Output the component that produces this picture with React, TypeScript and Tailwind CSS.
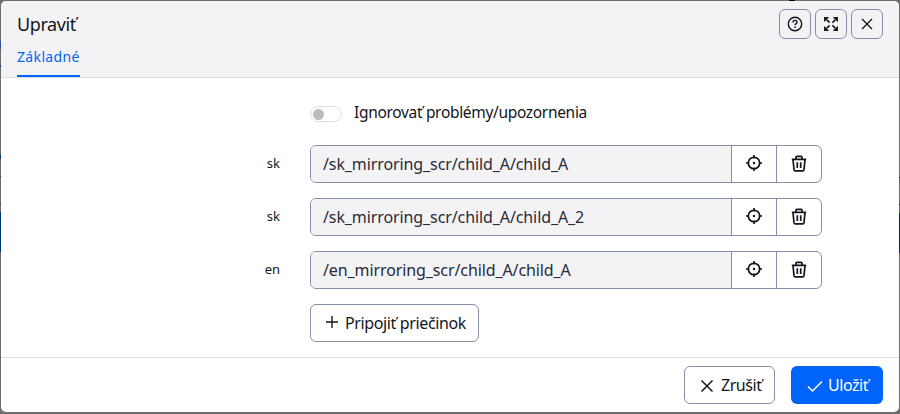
import React from "react";

type IconProps = { children: React.ReactNode; className: string; width?: number };

function Icon({ children, className, width = 1.5 }: IconProps) {
  return (
    <svg viewBox="0 0 16 16" fill="none" stroke="currentColor" strokeWidth={width} className={`shrink-0 ${className}`}>
      {children}
    </svg>
  );
}

const HelpIcon = () => (
  <Icon className="size-4" width={1.4}>
    <circle cx="8" cy="8" r="6.7" />
    <path d="M6 6.4C6 5.1 6.8 4.4 8 4.4s2 .7 2 1.8c0 1.4-1.9 1.5-1.9 3" />
    <path d="M8.1 10.4v1.5" />
  </Icon>
);

const ExpandIcon = () => (
  <Icon className="size-4" width={1.5}>
    <path d="M1.8 5.6V1.8h3.8M10.4 1.8h3.8v3.8M14.2 10.4v3.8h-3.8M5.6 14.2H1.8v-3.8M2 2l4.6 4.6M14 2L9.4 6.6M14 14L9.4 9.4M2 14l4.6-4.6" />
  </Icon>
);

const CloseIcon = () => (
  <Icon className="size-4" width={1.4}>
    <path d="M3 3l10 10M13 3L3 13" />
  </Icon>
);

const TargetIcon = () => (
  <Icon className="mb-[2px] size-4" width={1.7}>
    <circle cx="8" cy="8" r="5.7" />
    <path d="M8 0v3.2M8 12.8V16M0 8h3.2M12.8 8H16" />
    <circle cx="8" cy="8" r="1.2" fill="currentColor" stroke="none" />
  </Icon>
);

const TrashIcon = () => (
  <Icon className="mb-[2px] h-[17px] w-4" width={1.7}>
    <path d="M.8 3.9h14.4M2 4l1 10.2c.1.8.5 1.2 1.3 1.2h7.4c.8 0 1.2-.4 1.3-1.2L14 4M5 3.8V1.7c0-.5.3-.8.8-.8h4.4c.5 0 .8.3.8.8v2.1M6.3 6.7v5.9M9.7 6.7v5.9" />
  </Icon>
);

const folders = [
  { lang: "sk", path: "/sk_mirroring_scr/child_A/child_A" },
  { lang: "sk", path: "/sk_mirroring_scr/child_A/child_A_2" },
  { lang: "en", path: "/en_mirroring_scr/child_A/child_A" },
];

const headerActions = [HelpIcon, ExpandIcon, CloseIcon];

export default function App() {
  return (
    <div className="flex h-[414px] w-[900px] overflow-hidden bg-[#6d6d6f] font-['Noto_Sans','Open_Sans',sans-serif] text-[#13151b]">
      <div className="flex w-px shrink-0 flex-col">
        <div className="mt-[41px] h-2 bg-[#35549a]" />
        <div className="mt-4 h-0.5 bg-[#073589]" />
        <div className="mt-[88px] h-1 bg-[#063b88]" />
        <div className="mt-[17px] h-px bg-[#333]" />
        <div className="mt-[26px] h-px bg-[#333]" />
        <div className="mt-2 h-10 bg-[#00317f]" />
      </div>

      <div className="flex w-[898px] shrink-0 flex-col">
        <div className="h-px shrink-0 pl-[788px]">
          <div className="h-px w-[6px] bg-black" />
        </div>
        <section className="flex h-[411px] shrink-0 flex-col overflow-hidden rounded-[5px] bg-white">
          <header className="flex h-[77px] shrink-0 justify-between border-b border-[#dcdde1] bg-[#f3f3f6] pr-4 pl-4">
            <div className="flex flex-col items-start">
              <h1 className="mt-[11px] h-[25px] text-[18px] leading-[25px] tracking-[-0.4px] whitespace-nowrap">Upraviť</h1>
              <div className="mt-[7px] h-[33px] w-[63px] border-b-2 border-[#0063fb] text-[14px] leading-[25px] tracking-[0.35px] whitespace-nowrap text-[#0063fb]">
                Základné
              </div>
            </div>
            <div className="flex gap-1 pt-2">
              {headerActions.map((Glyph, i) => (
                <button key={i} className="flex h-[30px] w-8 items-center justify-center rounded-[6px] border border-[#868ea9]">
                  <Glyph />
                </button>
              ))}
            </div>
          </header>

          <main className="flex h-[279px] shrink-0 flex-col">
            <div className="mt-[22px] ml-[309px] flex h-6 items-center">
              <div className="mt-1 flex h-4 w-8 items-center rounded-full border border-[#dcdfe7] pl-[2px]">
                <div className="size-[11px] rounded-full bg-[#bdbdbd]" />
              </div>
              <span className="ml-[12px] text-[15.5px] leading-6 tracking-[-0.32px] whitespace-nowrap">Ignorovať problémy/upozornenia</span>
            </div>
            <div className="mt-[21px] flex flex-col gap-[15px]">
              {folders.map((folder) => (
                <div key={folder.path} className="flex h-[38px]">
                  <label className="w-[279px] pt-[7px] text-right text-[13px] leading-[22px]">{folder.lang}</label>
                  <div className="ml-[30px] flex w-[512px] overflow-hidden rounded-[6px] border border-[#868ea9]">
                    <div className="w-[420px] bg-[#f3f3f6] pl-3 text-[16px] leading-[37px] tracking-[-0.1px] whitespace-nowrap text-[#292b36]">
                      {folder.path}
                    </div>
                    <button className="flex w-[45px] items-center justify-center border-l border-[#868ea9]">
                      <TargetIcon />
                    </button>
                    <button className="flex w-[45px] items-center justify-center border-l border-[#868ea9]">
                      <TrashIcon />
                    </button>
                  </div>
                </div>
              ))}
            </div>
            <button className="mt-[15px] ml-[309px] flex h-[38px] w-[169px] items-center rounded-[6px] border border-[#868ea9] pl-[13px]">
              <Icon className="mb-[2px] size-4" width={1.4}><path d="M8 2v12M2 8h12" /></Icon>
              <span className="ml-[5px] text-[16px] tracking-[-0.37px] whitespace-nowrap">Pripojiť priečinok</span>
            </button>
          </main>

          <footer className="flex h-[55px] shrink-0 justify-end gap-4 border-t border-[#dcdde1] pt-2 pr-4">
            <button className="flex h-[38px] w-[91px] items-center rounded-[6px] border border-[#868ea9] pl-[14px]">
              <Icon className="mt-px size-4"><path d="M2.5 2.5l11 11M13.5 2.5l-11 11" /></Icon>
              <span className="ml-[6px] text-[16px] tracking-[-0.45px] whitespace-nowrap">Zrušiť</span>
            </button>
            <button className="flex h-[38px] w-[92px] items-center rounded-[6px] bg-[#0063fb] pl-4 text-white">
              <Icon className="mt-px size-4"><path d="M1 8.5l4.5 4.5L15 3.5" /></Icon>
              <span className="ml-[5px] text-[16px] tracking-[-0.45px] whitespace-nowrap">Uložiť</span>
            </button>
          </footer>
        </section>
      </div>

      <div className="flex w-px shrink-0 flex-col">
        <div className="mt-[177px] h-px bg-[#333]" />
        <div className="mt-[26px] h-px bg-[#333]" />
        <div className="mt-2 h-10 bg-[#002660]" />
      </div>
    </div>
  );
}
